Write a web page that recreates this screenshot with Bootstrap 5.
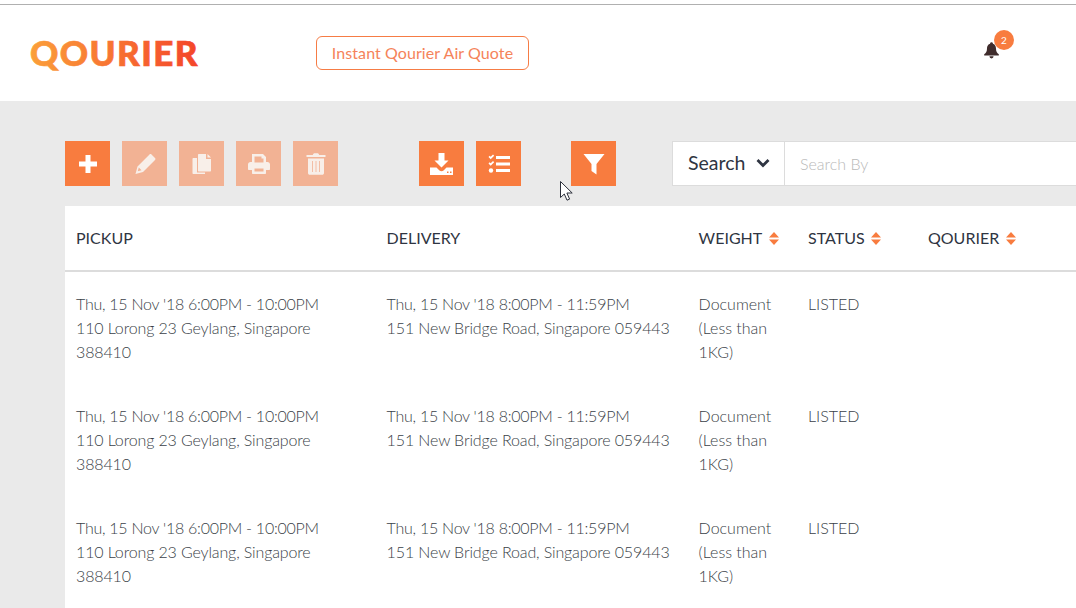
<!DOCTYPE html>
<html lang="en"><head><meta charset="utf-8"><title>Qourier</title>
<link rel="stylesheet" href="https://cdn.jsdelivr.net/npm/bootstrap@5.3.0/dist/css/bootstrap.min.css">
<style>
html,body{height:608px;overflow:hidden}
body{background:#eaeaea;font-family:Lato,sans-serif;color:#333;width:1076px;position:relative}
.top-rule{height:5px;background:#fff;border-bottom:1px solid #b0b0b0}
.site-head{height:96px;background:#fff;padding-left:30px;position:relative}
.logo-svg{flex:none;margin-right:106px;display:block}
.logo-svg text{font-family:Lato,sans-serif;font-weight:900;font-size:35px;letter-spacing:1.4px;stroke-width:.7px}
.quote-btn{width:213px;height:34px;font-size:16px;font-weight:400;letter-spacing:.08px;color:#f5835a;border:1px solid #f67c45;border-radius:6px;padding:0;background:#fff;line-height:32px;margin-top:-1px}
.bell-wrap{position:absolute;left:984px;top:37px;width:15px;height:17px;color:#3f2c2c}
.bell-wrap svg{display:block}
.bell-count{position:absolute;left:10px;top:-12px;width:20px;height:20px;border-radius:50%;background:#f87c3f;color:#fff;font-size:10px;line-height:20px;text-align:center}
.mouse-arrow{position:absolute;left:560px;top:181px;z-index:5}
.tool-row{padding:40px 0 20px 65px;height:105px;overflow:hidden;flex-wrap:nowrap}
.tool-btn{width:45px;height:45px;background:#f87c3f;border:0;border-radius:0;padding:0;display:flex;align-items:center;justify-content:center;flex:none}
.tool-btn.off{background:#f2b294}
.tool-btn svg{fill:#fff}
.tool-btn.off svg{fill:#f8efe9}
.gap-s{margin-left:12px}
.gap-m{margin-left:81px}
.gap-l{margin-left:50px}
.search-box{margin-left:56px;height:45px;width:500px;background:#fff;border:1px solid #dcdcdc;flex:none}
.search-drop{width:112px;border-right:1px solid #dcdcdc;font-size:19.5px;color:#2f3542;padding:0 0 2px 15px;height:100%}
.search-drop svg{margin-left:11px}
.search-in{border:0;outline:0;flex:1;padding:0 15px;font-size:16px;font-weight:300;font-family:Lato,sans-serif;min-width:0}
.search-in::placeholder{color:#b9b9b9}
.data-wrap{margin-left:65px;width:1011px;background:#fff}
.data-tbl{width:1011px;table-layout:fixed;margin:0;border-collapse:collapse}
.data-tbl th{height:65px;padding:0 0 0 11px;font-weight:400;font-size:16px;color:#2f3542;vertical-align:middle;border-bottom:2px solid #dcdcdc;white-space:nowrap}
.data-tbl td{padding:20px 11px;font-weight:300;font-size:16px;line-height:24px;color:#3a3f48;vertical-align:top;border:0;height:112px}
.data-tbl .nudge{padding-left:11.6px}
.data-tbl td.narrow{padding-right:0}
.when-line{letter-spacing:-.25px}
.addr-line{letter-spacing:-.13px}
.sort-mark{display:inline-block;vertical-align:-1px;margin-left:3px}
.sort-mark.tight{margin-left:2px}
.col-a{width:310px}.col-b{width:312px}.col-c{width:110px}.col-d{width:120px}
</style></head><body>
<div class="top-rule"></div>
<header class="site-head d-flex align-items-center">
  <svg class="logo-svg" width="180" height="44" viewBox="0 0 180 44" role="img" aria-label="Qourier">
    <defs><linearGradient id="lg" gradientUnits="userSpaceOnUse" x1="0" x2="168" y1="0" y2="0"><stop offset="0" stop-color="#fb9f3a"/><stop offset="1" stop-color="#f4452a"/></linearGradient></defs>
    <text x="0" y="35" fill="url(#lg)" stroke="url(#lg)">QOURIER</text>
  </svg>
  <button class="btn quote-btn" type="button">Instant Qourier Air Quote</button>
  <div class="bell-wrap">
    <svg width="15" height="17" viewBox="0 0 16 18" fill="currentColor"><circle cx="8" cy="1.600" r="1.400"/><path d="M8 1.500c3 0 4.800 2.300 4.800 5.400 0 3 1 4.600 3 6.100v1.200H.2V13c2-1.500 3-3.100 3-6.100C3.200 3.800 5 1.500 8 1.500z"/><path d="M5.800 15.200h4.400a2.200 2.200 0 0 1-4.400 0z"/></svg>
    <span class="bell-count">2</span>
  </div>
</header>
<div class="tool-row d-flex align-items-start">
  <button class="tool-btn" type="button" aria-label="Add"><svg width="20" height="20" viewBox="0 0 20 20"><path d="M7.500 1h5v6.500H19v5h-6.500V19h-5v-6.500H1v-5h6.500z"/></svg></button>
  <button class="tool-btn off gap-s" type="button" aria-label="Edit"><svg width="22" height="22" viewBox="0 0 22 22"><path d="M15.500 1.500l-12 12L1.500 21l7.500-2 12-12c.6-.6.6-1.400 0-2l-3.500-3.500c-.6-.6-1.400-.6-2 0zM4.800 14.500l2.700 2.700-3.700 1z"/></svg></button>
  <button class="tool-btn off gap-s" type="button" aria-label="Copy"><svg width="20" height="22" viewBox="0 0 20 22"><path d="M7 1h7v5h5v11.500c0 .6-.4 1-1 1H7c-.6 0-1-.4-1-1V2c0-.6.400-1 1-1zM15.500 1l3.500 3.500h-3.500zM1.500 5H5v14.500h8V21H1.500c-.6 0-1-.4-1-1V6c0-.6.400-1 1-1z"/></svg></button>
  <button class="tool-btn off gap-s" type="button" aria-label="Print"><svg width="22" height="20" viewBox="0 0 22 20"><path fill-rule="evenodd" d="M4 0h11l3 3v5h1.500c1.300 0 2.500 1.100 2.500 2.500V15c0 .6-.4 1-1 1h-3v3c0 .6-.4 1-1 1H5c-.6 0-1-.4-1-1v-3H1c-.6 0-1-.4-1-1v-4.500C0 9.100 1.200 8 2.500 8H4zM6.500 2.500v6h9V4.500h-2v-2zM6.500 14.500v3h9v-3z"/></svg></button>
  <button class="tool-btn off gap-s" type="button" aria-label="Delete"><svg width="20" height="22" viewBox="0 0 20 22"><path fill-rule="evenodd" d="M7 1.500C7.300.6 8 .2 8.800.2h2.400c.8 0 1.500.4 1.800 1.300l.2.500H19.500v2H.5V2H6.800zM2 5.500h16V20c0 1-.8 1.800-1.800 1.800H3.800C2.800 21.800 2 21 2 20zM6.200 8v11h.8V8zm3.400 0v11h.8V8zm3.400 0v11h.8V8z"/></svg></button>
  <button class="tool-btn gap-m" type="button" aria-label="Download"><svg width="23" height="22" viewBox="0 0 23 22"><path d="M8.500 0h6v7.500h4l-7 7-7-7h4zM0 14.500h6.500l3 3c1.100 1 2.900 1 4 0l3-3H23V22H0zM17 18.500v1.500h1.500v-1.500zm3 0v1.500h1.500v-1.500z"/></svg></button>
  <button class="tool-btn gap-s" type="button" aria-label="Tasks"><svg width="22" height="20" viewBox="0 0 22 20"><path d="M8 2h14v3H8zM8 8.500h14v3H8zM8 15h14v3H8z"/><path d="M.5 3l1.200-1.200 1 1L5 .5 6.200 1.700 2.700 5.200zM.5 9.500l1.200-1.200 1 1L5 7l1.200 1.200-3.500 3.500z"/><circle cx="3" cy="16.500" r="2.200"/></svg></button>
  <button class="tool-btn gap-l" type="button" aria-label="Filter"><svg width="22" height="22" viewBox="0 0 22 22"><path d="M.5 1h21L13.500 11v10.500l-5-3.500v-7z"/></svg></button>
  <div class="search-box d-flex align-items-center">
    <div class="search-drop d-flex align-items-center">Search<svg width="14" height="10" viewBox="0 0 14 10"><path d="M1.500 2l5.500 5.500L12.500 2" fill="none" stroke="#2f3542" stroke-width="2.800"/></svg></div>
    <input class="search-in" type="text" placeholder="Search By" aria-label="Search By">
  </div>
</div>
<main class="data-wrap">
<table class="data-tbl">
<colgroup><col class="col-a"><col class="col-b"><col class="col-c"><col class="col-d"><col></colgroup>
<thead><tr>
<th>PICKUP</th><th class="nudge">DELIVERY</th>
<th class="nudge">WEIGHT <svg class="sort-mark" width="10" height="13" viewBox="0 0 10 13" fill="#f87c3f"><path d="M5 0l5 5.500H0zM0 7.500h10L5 13z"/></svg></th>
<th>STATUS <svg class="sort-mark tight" width="10" height="13" viewBox="0 0 10 13" fill="#f87c3f"><path d="M5 0l5 5.500H0zM0 7.500h10L5 13z"/></svg></th>
<th>QOURIER <svg class="sort-mark" width="10" height="13" viewBox="0 0 10 13" fill="#f87c3f"><path d="M5 0l5 5.500H0zM0 7.500h10L5 13z"/></svg></th>
</tr></thead>
<tbody>
<tr><td><span class="when-line">Thu, 15 Nov '18 6:00PM - 10:00PM</span><br><span class="addr-line">110 Lorong 23 Geylang, Singapore 388410</span></td><td class="nudge"><span class="when-line">Thu, 15 Nov '18 8:00PM - 11:59PM</span><br><span class="addr-line">151 New Bridge Road, Singapore 059443</span></td><td class="narrow nudge">Document (Less than 1KG)</td><td>LISTED</td><td></td></tr>
<tr><td><span class="when-line">Thu, 15 Nov '18 6:00PM - 10:00PM</span><br><span class="addr-line">110 Lorong 23 Geylang, Singapore 388410</span></td><td class="nudge"><span class="when-line">Thu, 15 Nov '18 8:00PM - 11:59PM</span><br><span class="addr-line">151 New Bridge Road, Singapore 059443</span></td><td class="narrow nudge">Document (Less than 1KG)</td><td>LISTED</td><td></td></tr>
<tr><td><span class="when-line">Thu, 15 Nov '18 6:00PM - 10:00PM</span><br><span class="addr-line">110 Lorong 23 Geylang, Singapore 388410</span></td><td class="nudge"><span class="when-line">Thu, 15 Nov '18 8:00PM - 11:59PM</span><br><span class="addr-line">151 New Bridge Road, Singapore 059443</span></td><td class="narrow nudge">Document (Less than 1KG)</td><td>LISTED</td><td></td></tr>
</tbody></table>
</main>
<svg class="mouse-arrow" width="13" height="20" viewBox="0 0 13 20" aria-hidden="true"><path d="M.5.500v16l3.800-3.500 2.700 6.200 2.600-1.100-2.700-6.100h5.300z" fill="#fff" stroke="#2b2f3a" stroke-width="1"/></svg>
</body></html>
